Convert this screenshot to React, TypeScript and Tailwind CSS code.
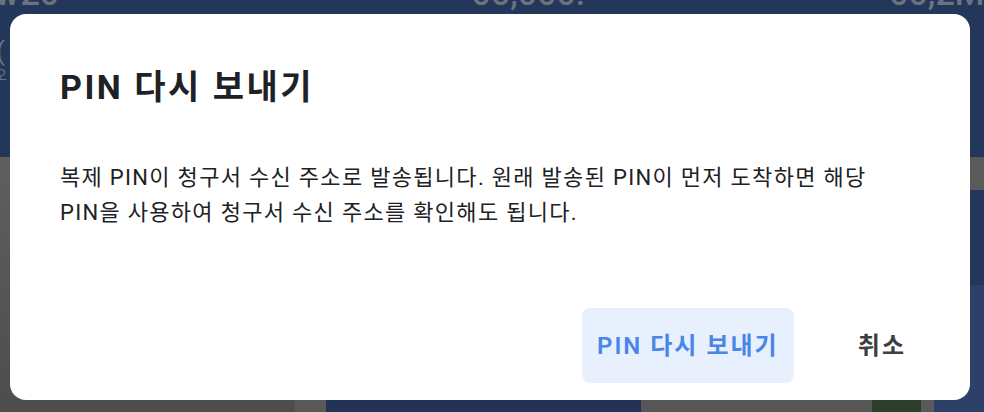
const FONT = "font-['Roboto','Noto_Sans_CJK_KR',sans-serif]";

function Backdrop() {
  return (
    <div className="flex h-full w-full flex-col">
      <div className="h-[157px] bg-[#22375a]">
        <div className="-mt-[24px] flex items-start justify-between text-[34px] font-medium leading-none text-[#6b7280]">
          <span className="-ml-[6px]">₩20</span>
          <span className="ml-[120px]">00,000.-</span>
          <span className="-mr-[10px]">00,2M.</span>
        </div>
        <div className="mt-[28px] -ml-[4px] text-[26px] leading-none text-[#6b7280]">(</div>
        <div className="mt-[4px] -ml-[6px] text-[14px] leading-none text-[#6b7280]">오</div>
      </div>
      <div className="flex flex-1">
        <div className="w-[295px] bg-gradient-to-b from-[#5f5f5f] to-[#4d4d4d]" />
        <div className="w-[31px] bg-[#595959]" />
        <div className="w-[315px] bg-[#233357]" />
        <div className="w-[231px] bg-[#565656]" />
        <div className="w-[49px] bg-[#2b3f2b]" />
        <div className="w-[13px] bg-[#5a5a5a]" />
        <div className="flex flex-1 flex-col">
          <div className="h-[33px] bg-[#5a5a5a]" />
          <div className="h-[95px] bg-[#22375a]" />
          <div className="flex-1 bg-[#2c4068]" />
        </div>
      </div>
    </div>
  );
}

export default function App() {
  return (
    <div className={`relative h-[412px] w-[984px] overflow-hidden ${FONT}`}>
      <Backdrop />
      <div
        role="dialog"
        className="absolute left-[10px] top-[14px] flex h-[386px] w-[960px] flex-col rounded-[16px] bg-white pl-[50px] pr-[48px]"
      >
        <h2 className="mt-[53px] text-[34px] font-bold leading-[40px] tracking-[2.5px] text-[#202124]">
          PIN 다시 보내기
        </h2>
        <p className="mt-[53px] text-[22px] leading-[35px] tracking-[1.3px] text-[#202124]">
          복제 PIN이 청구서 수신 주소로 발송됩니다. 원래 발송된 PIN이 먼저 도착하면 해당
          <br />
          PIN을 사용하여 청구서 수신 주소를 확인해도 됩니다.
        </p>
        <div className="mt-auto mb-[17px] flex items-center justify-end gap-[48px]">
          <button className="h-[75px] w-[212px] rounded-[8px] bg-[#e8f0fe] text-[24px] font-semibold tracking-[2px] text-[#4a86e8]">
            PIN 다시 보내기
          </button>
          <button className="h-[75px] rounded-[8px] px-[16px] text-[24px] font-semibold tracking-[2px] text-[#3c4043]">
            취소
          </button>
        </div>
      </div>
    </div>
  );
}
